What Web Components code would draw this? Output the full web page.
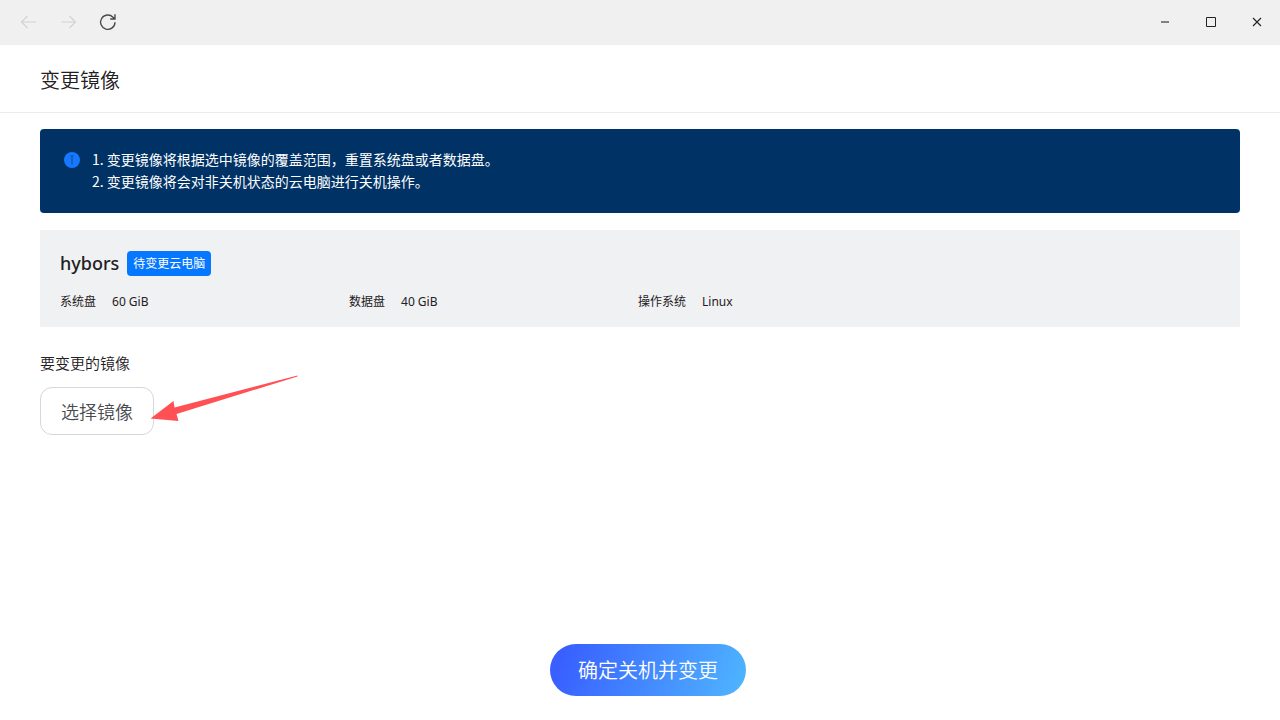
<!DOCTYPE html>
<html lang="zh-CN">
<head>
<meta charset="utf-8">
<title>变更镜像</title>
<style>
html, body { height: 100%; }
body { margin: 0; background: #fff; color: #1f2023; font-family: "Noto Sans", "Noto Sans CJK SC", sans-serif; }
</style>
</head>
<body>
<change-image-page></change-image-page>

<script>
const define = (name, html) => {
  const template = document.createElement('template');
  template.innerHTML = html;
  customElements.define(name, class extends HTMLElement {
    constructor() {
      super();
      this.attachShadow({ mode: 'open' }).append(template.content.cloneNode(true));
    }
  });
};

define('window-bar', `
<style>
:host { display: flex; justify-content: space-between; align-items: flex-start; height: 45px; background: #f0f0f0; }
nav, div { display: flex; align-items: center; }
nav { padding-left: 8px; }
button { display: grid; place-items: center; width: 40px; height: 44px; padding: 0; border: 0; background: none; color: #4a4a4a; }
button:disabled { color: #d2d2d2; }
div button { width: 46px; color: #222; }
svg { display: block; fill: none; stroke: currentColor; }
</style>
<nav>
  <button disabled aria-label="后退"><svg width="16" height="16" stroke-width="1.2"><path d="M16 8H1.500M7.500 2L1.500 8l6 6"/></svg></button>
  <button disabled aria-label="前进"><svg width="16" height="16" stroke-width="1.2"><path d="M1.500 8H15.500M9.500 2l6 6-6 6"/></svg></button>
  <button aria-label="刷新"><svg width="18" height="18" stroke-width="1.4"><path d="M16 9.200A7.200 7.200 0 1 1 14 4.200L15.600 5.800M16 1.200V6H11.200"/></svg></button>
</nav>
<div>
  <button aria-label="最小化"><svg width="10" height="10"><path d="M1 5H9" stroke-width="1.600" stroke="#666"/></svg></button>
  <button aria-label="最大化"><svg width="12" height="12"><path d="M1.500 1.500h9v9h-9z"/></svg></button>
  <button aria-label="关闭"><svg width="10" height="10" stroke-width="1.100"><path d="M1 1l8 8M9 1L1 9"/></svg></button>
</div>`);

define('page-title', `
<style>
:host { display: block; padding: 21px 40px 18px; border-bottom: 1px solid #ebebeb; }
h1 { margin: 0; font-family: "Noto Sans CJK SC", sans-serif; font-size: 20px; line-height: 28px; font-weight: 350; }
</style>
<h1><slot></slot></h1>`);

define('notice-box', `
<style>
:host { display: flex; gap: 12px; padding: 19px 24px 21px; border-radius: 4px; background: #003266; color: #fff;
  font-family: "Noto Sans CJK SC", sans-serif; font-size: 14px; line-height: 22px; }
svg { flex: none; margin-top: 4px; }
</style>
<svg width="16" height="16" aria-hidden="true"><circle cx="8" cy="8" r="8" fill="#1677ff"/><path d="M8 3.500v9M6.500 4h3" stroke="#0b55b8" stroke-width="1.300"/></svg>
<div><slot></slot></div>`);

define('info-field', `
<style>
:host { display: flex; gap: 16px; font-size: 12px; line-height: 20px; }
</style>
<span><slot name="label"></slot></span><span><slot></slot></span>`);

define('machine-card', `
<style>
:host { display: block; padding: 20px 20px 15px; background: #f0f1f2; }
header { display: flex; align-items: center; gap: 8px; }
h2 { margin: 0; font-size: 18px; line-height: 26px; font-weight: 500; }
.tag { padding: 0 6px; border-radius: 4px; background: #0678ff; color: #fff; font-size: 12px; line-height: 25px; }
.fields { display: grid; grid-template-columns: repeat(4, 1fr); padding: 16px 4px 0 0; }
</style>
<header><h2><slot name="name"></slot></h2><span class="tag"><slot name="tag"></slot></span></header>
<div class="fields"><slot></slot></div>`);

define('image-picker', `
<style>
:host { display: block; }
h3 { margin: 0 0 12px; font-family: "Noto Sans CJK SC", sans-serif; font-size: 15px; line-height: 24px; font-weight: 350; }
.row { position: relative; width: max-content; }
button { display: block; height: 48px; padding: 0 20px; border: 1px solid #d5d7dc; border-radius: 12px; background: #fff; color: #4a4b50;
  font: 350 18px/26px "Noto Sans CJK SC", sans-serif; }
svg { position: absolute; left: 110px; top: -12px; pointer-events: none; }
</style>
<h3 id="caption">要变更的镜像</h3>
<div class="row">
  <button aria-describedby="caption">选择镜像</button>
  <svg width="148" height="48" aria-hidden="true"><path d="M147.500 .5L24.500 32.500 23.500 26 .5 43.500l28 2.500-2-7L147.500 1.500z" fill="#ff5053"/></svg>
</div>`);

define('submit-bar', `
<style>
:host { display: flex; justify-content: center; padding: 0 0 24px 16px; }
button { height: 52px; padding: 0 28px; border: 0; border-radius: 26px; color: #fff;
  background: linear-gradient(110deg, #3960ff 8%, #4eb3ff 96%); font: 350 20px/28px "Noto Sans CJK SC", sans-serif; }
</style>
<button><slot></slot></button>`);

define('change-image-page', `
<style>
:host { display: flex; flex-direction: column; min-height: 100%; }
main { flex: 1; display: flex; flex-direction: column; padding: 16px 40px; }
machine-card { margin: 17px 0 24px; }
p { margin: 0; }
</style>
<window-bar></window-bar>
<page-title>变更镜像</page-title>
<main>
  <notice-box>
    <p>1. 变更镜像将根据选中镜像的覆盖范围，重置系统盘或者数据盘。</p>
    <p>2. 变更镜像将会对非关机状态的云电脑进行关机操作。</p>
  </notice-box>
  <machine-card>
    <span slot="name">hybors</span><span slot="tag">待变更云电脑</span>
    <info-field><span slot="label">系统盘</span>60 GiB</info-field>
    <info-field><span slot="label">数据盘</span>40 GiB</info-field>
    <info-field><span slot="label">操作系统</span>Linux</info-field>
  </machine-card>
  <image-picker></image-picker>
</main>
<submit-bar>确定关机并变更</submit-bar>`);
</script>
</body>
</html>
